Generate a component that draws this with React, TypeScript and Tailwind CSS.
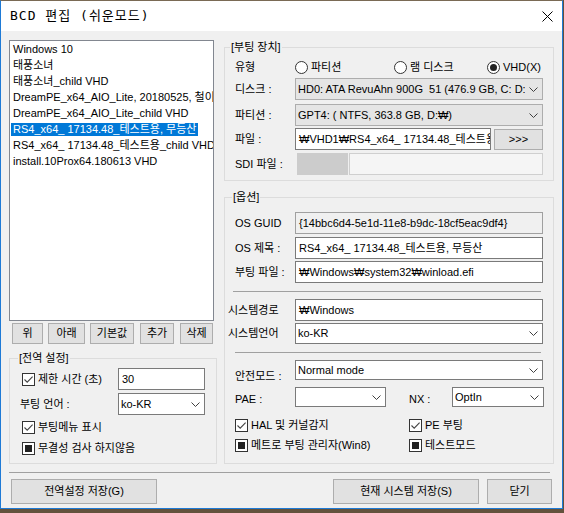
import React from 'react'

const items = [
  'Windows 10',
  '태풍소녀',
  '태풍소녀_child VHD',
  'DreamPE_x64_AIO_Lite, 20180525, 철이',
  'DreamPE_x64_AIO_Lite_child VHD',
  'RS4_x64_ 17134.48_테스트용, 무등산',
  'RS4_x64_ 17134.48_테스트용_child VHD',
  'install.10Prox64.180613 VHD',
]

const Chevron = () => (
  <svg width="9" height="5" viewBox="0 0 9 5" className="shrink-0">
    <polyline points="0.5,0.5 4.5,4.5 8.5,0.5" fill="none" stroke="#404040" strokeWidth="1" />
  </svg>
)

// combobox: gray = dropdown list style, white = editable style
const Combo = ({ value, className, gray }: { value: string; className: string; gray?: boolean }) => (
  <div
    className={`flex items-center border ${gray ? 'bg-[#e5e5e5] border-[#adadad]' : 'bg-white border-[#7a7a7a]'} ${className}`}
  >
    <span className="flex-1 overflow-hidden whitespace-pre pl-[2px]">{value}</span>
    <span className="w-[17px] flex justify-center shrink-0">
      <Chevron />
    </span>
  </div>
)

const TextBox = ({ value, className }: { value: string; className: string }) => (
  <div className={`flex items-center overflow-hidden whitespace-pre border pl-[3px] ${className}`}>{value}</div>
)

const Check = ({ mixed }: { mixed?: boolean }) => (
  <span className="w-[13px] h-[13px] border border-[#333333] bg-white flex items-center justify-center shrink-0">
    {mixed ? (
      <span className="w-[7px] h-[7px] bg-[#222222]" />
    ) : (
      <svg width="11" height="11" viewBox="0 0 11 11">
        <path d="M1.5 5.5 L4.2 8.2 L9.6 2.6" fill="none" stroke="#444444" strokeWidth="1.1" />
      </svg>
    )}
  </span>
)

const Radio = ({ on }: { on?: boolean }) => (
  <span className="w-[13px] h-[13px] rounded-full border border-[#333333] bg-white flex items-center justify-center shrink-0">
    {on && <span className="w-[7px] h-[7px] rounded-full bg-[#222222]" />}
  </span>
)

const Btn = ({ label, className }: { label: string; className: string }) => (
  <div className={`flex items-center justify-center bg-[#e1e1e1] border border-[#adadad] ${className}`}>{label}</div>
)

const Group = ({ title, className, legend, children }: { title: string; className: string; legend: string; children?: React.ReactNode }) => (
  <div className={`relative border border-[#dcdcdc] ${className}`}>
    <span className={`absolute -top-[7px] bg-[#f0f0f0] px-px leading-[13px] ${legend}`}>{title}</span>
    {children}
  </div>
)

const Sep = ({ className }: { className: string }) => <div className={`h-px bg-[#a0a0a0] ${className}`} />

export default function App() {
  return (
    <div className="w-[564px] h-[513px] overflow-hidden bg-[#63523d]">
      <div className="w-[563px] h-[509px] flex flex-col border border-[#1e7ad6] border-t-[#7a6a55] font-['Liberation_Sans','Noto_Sans_CJK_KR',sans-serif] text-[11px] text-black">
        {/* title bar */}
        <div className="h-[30px] bg-white flex items-center justify-between pl-[9px] pr-[9px]">
          <span className="font-['DejaVu_Sans_Mono','Noto_Sans_CJK_KR',monospace] text-[13px] tracking-[1px]">
            BCD 편집 (쉬운모드)
          </span>
          <svg width="11" height="11" viewBox="0 0 11 11">
            <path d="M0.5 0.5 L10.5 10.5 M10.5 0.5 L0.5 10.5" stroke="#000" strokeWidth="1" />
          </svg>
        </div>

        <div className="flex-1 bg-[#f0f0f0] flex flex-col pl-[8px] pt-[9px]">
          <div className="flex gap-[7px]">
            {/* left column */}
            <div className="w-[208px] flex flex-col">
              <div className="w-[205px] h-[281px] border border-[#828790] bg-white overflow-hidden">
                {items.map((it, i) => (
                  <div key={i} className="h-4 flex items-center pl-px whitespace-nowrap">
                    <span className={`px-[2px] leading-[13px] ${i === 5 ? 'bg-[#0078d7] text-white' : ''}`}>{it}</span>
                  </div>
                ))}
              </div>
              <div className="flex h-[21px] mt-[2px]">
                <Btn label="위" className="ml-[3px] w-[31px]" />
                <Btn label="아래" className="ml-[5px] w-[37px]" />
                <Btn label="기본값" className="ml-[5px] w-[44px]" />
                <Btn label="추가" className="ml-[6px] w-[34px]" />
                <Btn label="삭제" className="ml-[6px] w-[33px]" />
              </div>
              <Group title="[전역 설정]" legend="left-[8px]" className="mt-[14px] h-[106px] pt-[9px] pl-[12px]">
                <div className="flex items-center h-[22px]">
                  <div className="w-[96px] flex items-center gap-[3px]">
                    <Check />
                    <span>제한 시간 (초)</span>
                  </div>
                  <TextBox value="30" className="w-[87px] h-[22px] bg-white border-[#7a7a7a]" />
                </div>
                <div className="flex items-center h-[22px] mt-[3px]">
                  <span className="-ml-[2px] w-[98px]">부팅 언어 :</span>
                  <Combo value="ko-KR" className="w-[87px] h-[22px]" />
                </div>
                <div className="flex items-center gap-[3px] h-[13px] mt-[6px]">
                  <Check />
                  <span>부팅메뉴 표시</span>
                </div>
                <div className="flex items-center gap-[3px] h-[13px] mt-[8px]">
                  <Check mixed />
                  <span>무결성 검사 하지않음</span>
                </div>
              </Group>
            </div>

            {/* right column */}
            <div className="w-[330px] flex flex-col pt-[7px]">
              <Group title="[부팅 장치]" legend="left-[5px]" className="h-[134px] pt-[9px] pl-[10px]">
                <div className="flex items-center h-[20px]">
                  <span className="w-[60px]">유형</span>
                  <div className="w-[99px] flex items-center gap-[3px]">
                    <Radio />
                    <span>파티션</span>
                  </div>
                  <div className="w-[93px] flex items-center gap-[3px]">
                    <Radio />
                    <span>램 디스크</span>
                  </div>
                  <div className="flex items-center gap-[3px]">
                    <Radio on />
                    <span>VHD(X)</span>
                  </div>
                </div>
                <div className="flex items-center h-[22px] mt-px">
                  <span className="w-[60px]">디스크 :</span>
                  <Combo gray value="HD0: ATA RevuAhn 900G  51 (476.9 GB, C: D: E:)" className="w-[248px] h-[22px]" />
                </div>
                <div className="flex items-center h-[22px] mt-[4px]">
                  <span className="w-[60px]">파티션 :</span>
                  <Combo gray value="GPT4: ( NTFS, 363.8 GB, D:₩)" className="w-[248px] h-[22px]" />
                </div>
                <div className="flex items-center h-[22px] mt-[2px]">
                  <span className="w-[60px]">파일 :</span>
                  <TextBox value="₩VHD1₩RS4_x64_ 17134.48_테스트용.vhdx" className="w-[196px] h-[22px] bg-white border-[#7a7a7a]" />
                  <Btn label=">>>" className="ml-[3px] w-[49px] h-[21px]" />
                </div>
                <div className="flex items-center h-[22px] mt-[3px]">
                  <span className="w-[62px]">SDI 파일 :</span>
                  <div className="w-[51px] h-[22px] bg-[#cccccc]" />
                  <div className="ml-[1px] w-[194px] h-[22px] bg-[#f5f5f5] border border-[#cfcfcf]" />
                </div>
              </Group>

              <Group title="[옵션]" legend="left-[7px]" className="mt-[16px] h-[267px] pt-[14px] pl-[10px]">
                <div className="flex items-center h-[22px]">
                  <span className="w-[60px]">OS GUID</span>
                  <TextBox value="{14bbc6d4-5e1d-11e8-b9dc-18cf5eac9df4}" className="w-[248px] h-[22px] bg-[#f0f0f0] border-[#a0a0a0]" />
                </div>
                <div className="flex items-center h-[22px] mt-[3px]">
                  <span className="w-[60px]">OS 제목 :</span>
                  <TextBox value="RS4_x64_ 17134.48_테스트용, 무등산" className="w-[248px] h-[22px] bg-white border-[#7a7a7a]" />
                </div>
                <div className="flex items-center h-[22px] mt-[2px]">
                  <span className="w-[60px]">부팅 파일 :</span>
                  <TextBox value="₩Windows₩system32₩winload.efi" className="w-[248px] h-[22px] bg-white border-[#7a7a7a]" />
                </div>
                <Sep className="mt-[8px] ml-[-2px] w-[308px]" />
                <div className="flex items-center h-[22px] mt-[7px]">
                  <span className="-ml-[7px] w-[67px]">시스템경로</span>
                  <TextBox value="₩Windows" className="w-[248px] h-[22px] bg-white border-[#7a7a7a]" />
                </div>
                <div className="flex items-center h-[21px] mt-[2px]">
                  <span className="-ml-[7px] w-[67px]">시스템언어</span>
                  <Combo value="ko-KR" className="w-[248px] h-[21px]" />
                </div>
                <Sep className="mt-[8px] w-[306px]" />
                <div className="flex items-start h-[20px] mt-[7px]">
                  <span className="w-[60px] pt-[10px] leading-[13px]">안전모드 :</span>
                  <Combo value="Normal mode" className="w-[248px] h-[20px]" />
                </div>
                <div className="flex items-start h-[20px] mt-[7px]">
                  <span className="w-[60px] pt-[6px] leading-[13px]">PAE :</span>
                  <Combo value="" className="w-[91px] h-[20px]" />
                  <span className="ml-[23px] w-[43px] pt-[6px] leading-[13px]">NX :</span>
                  <Combo value="OptIn" className="w-[92px] h-[20px]" />
                </div>
                <div className="flex items-center h-[14px] mt-[11px]">
                  <div className="w-[174px] flex items-center gap-[3px]">
                    <Check />
                    <span>HAL 및 커널감지</span>
                  </div>
                  <div className="flex items-center gap-[3px]">
                    <Check />
                    <span>PE 부팅</span>
                  </div>
                </div>
                <div className="flex items-center h-[14px] mt-[6px]">
                  <div className="w-[174px] flex items-center gap-[3px]">
                    <Check mixed />
                    <span>메트로 부팅 관리자(Win8)</span>
                  </div>
                  <div className="flex items-center gap-[3px]">
                    <Check mixed />
                    <span>테스트모드</span>
                  </div>
                </div>
              </Group>
            </div>
          </div>

          <Sep className="mt-[8px] w-[541px]" />
          <div className="flex h-[25px] mt-[6px] pr-[10px]">
            <Btn label="전역설정 저장(G)" className="ml-[2px] w-[146px]" />
            <Btn label="현재 시스템 저장(S)" className="ml-auto w-[146px]" />
            <Btn label="닫기" className="ml-[8px] w-[65px]" />
          </div>
        </div>
      </div>
    </div>
  )
}
